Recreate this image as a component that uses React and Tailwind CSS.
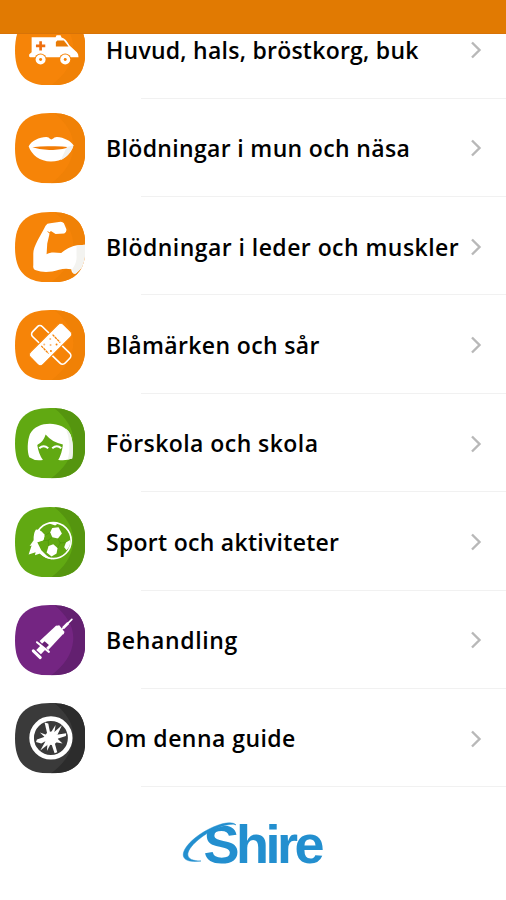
import React from 'react';

const SQUIRCLE = 'M106 0C180 0 212 32 212 106S180 212 106 212 0 180 0 106 32 0 106 0Z';

const Badge = ({ id, color, shade, children }) => (
  <svg viewBox="0 0 212 212" className="w-[70.5px] h-[70.5px] shrink-0" aria-hidden="true">
    <clipPath id={id}>
      <path d={SQUIRCLE} />
    </clipPath>
    <g clipPath={`url(#${id})`}>
      <rect width="212" height="212" fill={color} />
      <path d="M118 0C158 32 178 68 175 106C172 150 145 185 108 212H212V0Z" fill={shade} />
      {children}
    </g>
  </svg>
);

const Ambulance = () => (
  <Badge id="ambulance" color="#f68408" shade="#f08106">
    <g transform="translate(-43 18)" fill="#fff">
      <path d="M93 49H165L168 43H180L183 50C193 53 199 60 207 74L229 94Q234 98 234 109H89Q84 109 86 100L93 94Z" />
      <path d="M170 59H190L204 77H166V63Z" fill="#e87b06" />
      <path d="M116 61H124V71H134V79H124V89H116V79H106V71H116Z" fill="#ee6f10" />
      <circle cx="120" cy="116" r="18" fill="#f68408" />
      <circle cx="194" cy="116" r="18" fill="#f68408" />
      <circle cx="120" cy="116" r="15" />
      <circle cx="194" cy="116" r="15" />
      <circle cx="120" cy="116" r="4.5" fill="#f68408" />
      <circle cx="194" cy="116" r="4.5" fill="#f68408" />
    </g>
  </Badge>
);

const Lips = () => (
  <Badge id="lips" color="#f68408" shade="#f08106">
    <g transform="translate(-43 -38)">
      <path d="M84 138C92 122 116 110 137 110Q146 110 147 115Q152 120 158 115Q160 110 169 110C190 111 211 122 219 135C211 165 184 184 151 184S93 164 84 138Z" fill="#fff" />
      <path d="M95 141Q125 137 152 138Q180 137 207 141Q180 150 152 149Q122 150 95 141Z" fill="#f27c05" />
      <path d="M219 135C214 154 200 170 180 180L199 140Z" fill="#f1f1ef" />
    </g>
  </Badge>
);

const Arm = () => (
  <Badge id="arm" color="#f68408" shade="#f08106">
    <g transform="translate(-43 -39)">
      <path d="M135 80Q139 73 149 73L175 69Q185 66 190 73L197 89Q200 98 191 104L165 105L151 96Q146 98 146 108L140 134L138 166C147 159 162 160 182 162C198 151 207 144 226 140L262 137V190L226 224Q214 227 212 211C190 206 173 213 155 218Q125 222 106 214Q96 211 98 199L98 164C98 142 117 115 135 80Z" fill="#fff" />
      <path d="M228 140L262 137V190L226 224Q216 227 215 211Q230 191 228 170Z" fill="#f3f3f0" />
      <path d="M141 98L151 104" stroke="#f68408" strokeWidth="3" />
    </g>
  </Badge>
);

const Plaster = () => (
  <Badge id="plaster" color="#f68408" shade="#f08106">
    <g transform="translate(-43 -41)">
      <rect x="84" y="125" width="136" height="42" rx="11" transform="rotate(44 152 146)" fill="none" stroke="#fff" strokeWidth="5" />
      <rect x="80" y="118" width="140" height="53" rx="12" transform="rotate(-45 150 144.500)" fill="#fff" stroke="#f68408" strokeWidth="3" />
      <path d="M156 115L179 139M122 149L144 172" stroke="#f68408" strokeWidth="4" strokeDasharray="8 2" />
      <g fill="#f9b774">
        <circle cx="149" cy="128" r="3" />
        <circle cx="131" cy="145" r="3" />
        <circle cx="150" cy="146" r="3" />
      </g>
      <g fill="#f68408">
        <circle cx="168" cy="145" r="3" />
        <circle cx="151" cy="164" r="3" />
      </g>
    </g>
  </Badge>
);

const Child = () => (
  <Badge id="child" color="#61a912" shade="#55950f">
    <g transform="translate(-43 -42)">
      <path d="M86 190C79 172 80 140 88 120C100 98 123 89 148 89S198 99 209 120C218 142 219 172 215 194Q194 202 173 198Q184 181 187 152C166 148 148 138 135 122C130 139 121 148 110 153Q114 181 127 198Q105 203 86 190Z" fill="#fff" />
      <path d="M196 104Q206 112 210 122C218 142 219 172 215 194L202 197Q214 150 196 104Z" fill="#eef2ea" />
      <path d="M116 163Q129 151 143 163M155 163Q169 151 182 163" fill="none" stroke="#fff" strokeWidth="6" />
    </g>
  </Badge>
);

const Ball = () => (
  <Badge id="ball" color="#61a912" shade="#55950f">
    <g transform="translate(-43 -44)">
      <path d="M106 112Q98 124 99 144L87 161L93 160L84 187L105 180L103 189L118 184Q136 200 155 202L138 190L122 174L110 150L130 141L132 127L117 113Z" fill="#fff" />
      <circle cx="158" cy="145" r="54" fill="none" stroke="#fff" strokeWidth="5" />
      <g fill="#fff">
        <path d="M155 107L174 105L184 124L172 139L155 135L149 120Z" />
        <path d="M144 161L158 156L171 167L168 184L153 193L138 181Z" />
        <path d="M108 116L123 118L132 130L128 145L107 151Z" />
        <path d="M196 151L209 143Q211 161 198 174L191 165Z" />
        <path d="M144 93Q158 89 171 94L164 100Z" />
      </g>
      <path d="M155 135L143 144L144 161M172 139L179 152L171 167M132 130L149 120M179 152L196 151M128 145L143 144" fill="none" stroke="#4b9509" strokeWidth="2" />
    </g>
  </Badge>
);

const Syringe = () => (
  <Badge id="syringe" color="#742582" shade="#632070">
    <g transform="translate(-43 -46)">
      <path d="M186 117L214 89" stroke="#fff" strokeWidth="5" strokeLinecap="round" />
      <path d="M188 115L203 100" stroke="#fff" strokeWidth="8" />
      <path d="M165 109L176 107L192 127L188 135Z" fill="#fff" />
      <path d="M117 154L167 108L190 131L143 181Z" fill="#fff" />
      <path d="M122 165L132 155L145 166L135 177Z" fill="#682075" />
      <path d="M109 158L145 187" stroke="#fff" strokeWidth="6" strokeLinecap="round" />
      <path d="M127 174L114 188" stroke="#fff" strokeWidth="19" />
      <path d="M98 184L119 204" stroke="#fff" strokeWidth="9" strokeLinecap="round" />
    </g>
  </Badge>
);

const Wheel = () => (
  <Badge id="wheel" color="#3a3a3a" shade="#2c2c2c">
    <g transform="translate(-43 -40)" fill="#fff">
      <circle cx="151" cy="145" r="58" fill="none" stroke="#fff" strokeWidth="14" />
      <circle cx="152" cy="146" r="20" />
      {/* Wide spokes reach the rim, thin ones taper off */}
      <path d="M132 99L143 102L149 132L141 137Z" />
      <path d="M197 131L196 139L166 149L163 136Z" />
      <path d="M170 188L162 191L152 162L162 159Z" />
      <path d="M106 157L109 150L139 139L141 151L122 162Z" />
      <path d="M184 107L170 137L158 130Z" />
      <path d="M119 183L136 153L146 162Z" />
      <path d="M165 106L161 132L151 129Z" />
      <path d="M118 129L141 137L135 145Z" />
      <path d="M186 162L167 144L162 157Z" />
      <path d="M139 184L141 156L151 162Z" />
    </g>
  </Badge>
);

const items = [
  { label: 'Huvud, hals, bröstkorg, buk', icon: Ambulance, spacing: 'tracking-[0.25px]' },
  { label: 'Blödningar i mun och näsa', icon: Lips, spacing: 'tracking-[0.34px]' },
  { label: 'Blödningar i leder och muskler', icon: Arm, spacing: 'tracking-[0.45px]' },
  { label: 'Blåmärken och sår', icon: Plaster, spacing: 'tracking-[0.36px]' },
  { label: 'Förskola och skola', icon: Child, spacing: 'tracking-[0.44px]' },
  { label: 'Sport och aktiviteter', icon: Ball, spacing: 'tracking-[0.28px]' },
  { label: 'Behandling', icon: Syringe, spacing: 'tracking-[0.65px]' },
  { label: 'Om denna guide', icon: Wheel, spacing: 'tracking-[0.45px]' },
];

const MenuRow = ({ label, icon: Icon, spacing }) => (
  <li>
    <button className="flex items-center w-full h-[97.4px] pt-0.5 pl-[14.5px] pr-6 text-left">
      <Icon />
      <span className={`ml-[21px] flex-1 whitespace-nowrap text-[23px] font-semibold text-black ${spacing}`}>{label}</span>
      <svg viewBox="0 0 12 18" className="w-3 h-[18px] shrink-0" fill="none" stroke="#b8b8b8" strokeWidth="2.4">
        <path d="M2 1.500L9.500 9L2 16.500" />
      </svg>
    </button>
    <div className="ml-[141px] h-px bg-[#f1f1f1]" />
  </li>
);

const Logo = () => (
  <svg viewBox="0 0 170 70" className="w-[170px] h-[70px]" role="img" aria-label="Shire">
    <text x="33.500" y="53.500" textLength="121" fontSize="54" className="font-['Liberation_Sans'] font-bold" fill="#238fcf">Shire</text>
    <path d="M67 19C65 11 43 15 27 29C12 42 10 53 31 52" fill="none" stroke="#fff" strokeWidth="3" />
    <path d="M66 16C61 10 40 17 25 29C8 43 9 55 31 52C14 52 14 43 28 31C42 19 62 13 66 16Z" fill="#238fcf" stroke="#238fcf" strokeWidth="0.500" />
  </svg>
);

const App = () => {
  return (
    <div className="w-full h-[900px] overflow-hidden bg-white font-['Open_Sans',sans-serif]">
      {/* Header sits over the scrolled list */}
      <header className="relative z-10 h-[34px] bg-[#e17a02] border-b border-[#d87307]" />
      <ul className="-mt-[33.7px]">
        {items.map((item) => (
          <MenuRow key={item.label} {...item} />
        ))}
      </ul>
      <footer className="flex justify-center pt-[22px] pl-1">
        <Logo />
      </footer>
    </div>
  );
};

export default App;
